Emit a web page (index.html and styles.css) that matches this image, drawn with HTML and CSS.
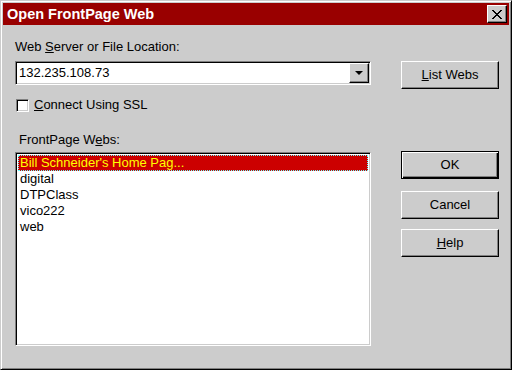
FILE: index.html
```html
<!DOCTYPE html>
<html lang="en">
  <head>
    <meta charset="UTF-8" />
    <title>Open FrontPage Web</title>
    <link rel="stylesheet" href="styles.css">
  </head>
  <body>
    <div class="window">
      <div class="titlebar">
        <span class="title">Open FrontPage Web</span>
        <button class="close-btn" type="button">
          <svg width="10" height="9" viewBox="0 0 10 9" shape-rendering="crispEdges">
            <path d="M0 0h2v1h1v1h1v1h2v-1h1v-1h1v-1h2v1h-1v1h-1v1h-1v1h-1v1h1v1h1v1h1v1h1v1h-2v-1h-1v-1h-1v-1h-2v1h-1v1h-1v1h-2v-1h1v-1h1v-1h1v-1h1v-1h-1v-1h-1v-1h-1z" fill="#000"/>
          </svg>
        </button>
      </div>

      <div class="dialog-body">
        <div class="left-col">
          <label class="field-label">Web <u>S</u>erver or File Location:</label>
          <div class="combo sunken">
            <span class="combo-text">132.235.108.73</span>
            <span class="combo-btn"><span class="arrow"></span></span>
          </div>

          <div class="check-row">
            <span class="checkbox sunken"></span>
            <span><u>C</u>onnect Using SSL</span>
          </div>

          <label class="field-label webs-label">FrontPage W<u>e</u>bs:</label>
          <ul class="listbox sunken">
            <li class="selected">Bill Schneider's Home Pag...</li>
            <li>digital</li>
            <li>DTPClass</li>
            <li>vico222</li>
            <li>web</li>
          </ul>
        </div>

        <div class="right-col">
          <button class="btn list-btn" type="button"><u>L</u>ist Webs</button>
          <button class="btn default ok-btn" type="button">OK</button>
          <button class="btn cancel-btn" type="button">Cancel</button>
          <button class="btn help-btn" type="button"><u>H</u>elp</button>
        </div>
      </div>
    </div>
  </body>
</html>
```

FILE: styles.css
```css
body {
  margin: 0;
  font-family: "Liberation Sans", Arial, sans-serif;
  font-size: 13px;
  color: #000;
  background: #cccccc;
}
.window {
  width: 512px;
  height: 370px;
  box-sizing: border-box;
  background: #cccccc;
  border: 1px solid;
  border-color: #cccccc #000 #000 #cccccc;
  box-shadow: inset 1px 1px #fff, inset -1px -1px #808080;
  padding: 2px;
}
.titlebar {
  height: 22px;
  background: #990000;
  display: flex;
  align-items: center;
  justify-content: space-between;
  padding-left: 4px;
}
.title {
  color: #fff;
  font-weight: bold;
  font-size: 14.5px;
}
.close-btn {
  width: 20px;
  height: 18px;
  margin-right: 2px;
  padding: 0;
  display: flex;
  align-items: center;
  justify-content: center;
  background: #cccccc;
  border: 1px solid;
  border-color: #fff #000 #000 #fff;
  box-shadow: inset -1px -1px #808080;
}
.dialog-body {
  display: flex;
  gap: 30px;
  padding: 14px 0 0 12px;
}
.left-col {
  width: 356px;
  display: flex;
  flex-direction: column;
}
.right-col {
  width: 98px;
  display: flex;
  flex-direction: column;
}
.field-label {
  display: block;
  line-height: 16px;
}
.sunken {
  box-sizing: border-box;
  background: #fff;
  border: 1px solid;
  border-color: #808080 #fff #fff #808080;
  box-shadow: inset 1px 1px #000, inset -1px -1px #cccccc;
}
.combo {
  margin-top: 6px;
  height: 24px;
  display: flex;
  align-items: center;
  padding: 1px;
}
.combo-text {
  flex: 1;
  padding-left: 2px;
  line-height: 16px;
}
.combo-btn {
  box-sizing: border-box;
  width: 20px;
  height: 20px;
  background: #cccccc;
  border: 1px solid;
  border-color: #fff #000 #000 #fff;
  box-shadow: inset -1px -1px #808080;
  display: flex;
  align-items: center;
  justify-content: center;
}
.arrow {
  width: 0;
  height: 0;
  border-left: 4px solid transparent;
  border-right: 4px solid transparent;
  border-top: 4px solid #000;
}
.check-row {
  margin-top: 12px;
  display: flex;
  align-items: center;
  gap: 5px;
  line-height: 16px;
  padding-left: 1px;
}
.checkbox {
  width: 13px;
  height: 13px;
}
.webs-label {
  margin-top: 19px;
  padding-left: 4px;
}
.listbox {
  list-style: none;
  margin: 4px 0 0;
  padding: 2px;
  height: 194px;
}
.listbox li {
  line-height: 16px;
  padding-left: 2px;
}
.listbox li.selected {
  background: #cc0000;
  color: #ffff00;
  outline: 1px dotted #66ffff;
  outline-offset: -1px;
}
.btn {
  box-sizing: border-box;
  width: 98px;
  height: 28px;
  padding: 0 0 1px;
  font-family: inherit;
  font-size: 13px;
  color: #000;
  background: #cccccc;
  border: 1px solid;
  border-color: #fff #000 #000 #fff;
  box-shadow: inset -1px -1px #808080;
}
.btn.default {
  border-color: #000;
  box-shadow: inset 1px 1px #fff, inset -1px -1px #000, inset -2px -2px #808080;
}
.list-btn {
  margin-top: 22px;
}
.ok-btn {
  margin-top: 62px;
}
.cancel-btn {
  margin-top: 12px;
}
.help-btn {
  margin-top: 10px;
}
```
